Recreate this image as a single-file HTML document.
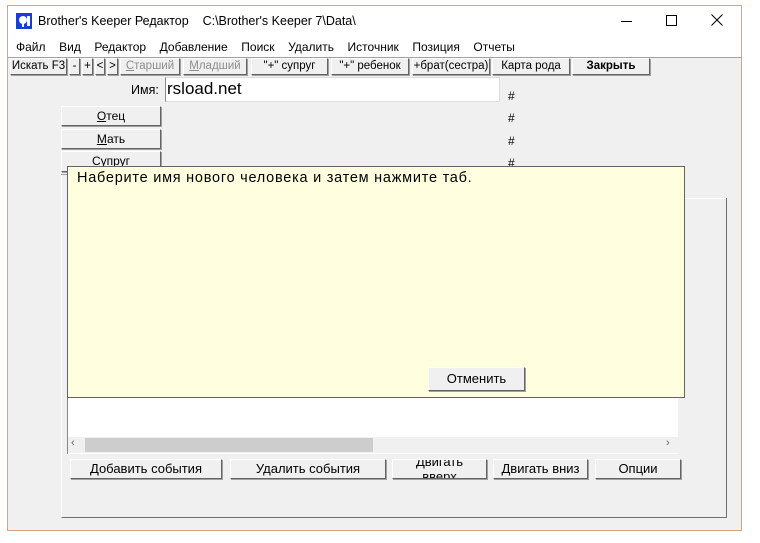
<!DOCTYPE html>
<html><head><meta charset="utf-8"><style>
*{margin:0;padding:0;box-sizing:border-box}
body{width:760px;height:543px;background:#fff;position:relative;overflow:hidden;font-family:"Liberation Sans","DejaVu Sans",sans-serif;font-size:12px;color:#000}
.a{position:absolute}
.win{left:7px;top:5px;width:735px;height:526px;border:1px solid #d9a47a;background:#f0f0f0}
.btn{position:absolute;background:#f0f0f0;border:1px solid;border-color:#fff #646464 #646464 #fff;box-shadow:1px 1px 0 #a0a0a0;text-align:center;font-size:12px;line-height:16px;white-space:nowrap;overflow:hidden}
.tb{top:58px;height:17px;font-size:11.5px;line-height:15px}
.menu span{margin-right:13.6px}
</style></head><body>
<div class="a win"></div>
<div class="a" style="left:8px;top:6px;width:733px;height:52px;background:#fff"></div>
<svg class="a" style="left:16px;top:13px" width="16" height="16"><rect width="16" height="16" fill="#1a3fd0"/><circle cx="7" cy="7" r="4" fill="#fff"/><rect x="6" y="9" width="2" height="5" fill="#fff"/><rect x="11" y="3" width="3" height="10" fill="#fff"/></svg>
<div class="a" style="left:38px;top:14px;font-size:12.5px">Brother's Keeper Редактор &nbsp;&nbsp; C:\Brother's Keeper 7\Data\</div>
<div class="a" style="left:621px;top:21px;width:11px;height:1px;background:#000"></div>
<div class="a" style="left:666px;top:15px;width:11px;height:11px;border:1px solid #000"></div>
<svg class="a" style="left:711px;top:14px" width="12" height="12"><path d="M0.5 0.5L11.5 11.5M11.5 0.5L0.5 11.5" stroke="#000" stroke-width="1"/></svg>
<div class="a menu" style="left:16px;top:40px;font-size:12px"><span>Файл</span><span>Вид</span><span>Редактор</span><span>Добавление</span><span>Поиск</span><span>Удалить</span><span>Источник</span><span>Позиция</span><span>Отчеты</span></div>
<div class="a" style="left:8px;top:57px;width:733px;height:1px;background:#a0a0a0"></div>
<div class="btn tb" style="left:10px;width:57px">Искать F3</div>
<div class="btn tb" style="left:69px;width:11px">-</div>
<div class="btn tb" style="left:82px;width:11px">+</div>
<div class="btn tb" style="left:95px;width:10px">&lt;</div>
<div class="btn tb" style="left:107px;width:11px">&gt;</div>
<div class="btn tb" style="left:120px;width:60px;color:#8d8d8d"><u>С</u>тарший</div>
<div class="btn tb" style="left:183px;width:64px;color:#8d8d8d"><u>М</u>ладший</div>
<div class="btn tb" style="left:251px;width:77px">"+" супруг</div>
<div class="btn tb" style="left:331px;width:78px">"+" ребенок</div>
<div class="btn tb" style="left:412px;width:78px">+брат(сестра)</div>
<div class="btn tb" style="left:492px;width:78px">Карта рода</div>
<div class="btn tb" style="left:572px;width:78px;font-weight:bold">Закрыть</div>
<div class="a" style="left:131px;top:83px;font-size:12.5px">Имя:</div>
<div class="a" style="left:165px;top:77px;width:335px;height:25px;background:#fff;border:1px solid #ddd;border-left:1px solid #888;font-size:17px;padding-left:1px;line-height:22px">rsload.net</div>
<div class="a" style="left:508px;top:85px;line-height:22.3px">#<br>#<br>#<br>#</div>
<div class="btn" style="left:61px;top:106px;width:100px;height:20px;line-height:18px"><u>О</u>тец</div>
<div class="btn" style="left:61px;top:129px;width:100px;height:20px;line-height:18px"><u>М</u>ать</div>
<div class="btn" style="left:61px;top:151px;width:100px;height:21px;line-height:18px"><u>С</u>упруг</div>
<div class="a" style="left:61px;top:175px;width:666px;height:343px;border:1px solid;border-color:transparent #707070 #707070 #fff"></div>
<div class="a" style="left:726px;top:175px;width:1px;height:23px;background:#f0f0f0"></div>
<div class="a" style="left:680px;top:198px;width:46px;height:1px;background:#fff"></div>
<div class="a" style="left:61px;top:174px;width:6px;height:1px;background:#a0a0a0"></div>
<div class="a" style="left:67px;top:398px;width:611px;height:56px;background:#fff;border-left:1px solid #888"></div>
<div class="a" style="left:68px;top:437px;width:610px;height:16px;background:#f0f0f0"></div>
<div class="a" style="left:85px;top:438px;width:288px;height:14px;background:#cdcdcd"></div>
<div class="a" style="left:71px;top:437px;font-size:11px;color:#606060">‹</div>
<div class="a" style="left:666px;top:437px;font-size:11px;color:#606060">›</div>
<div class="a" style="left:67px;top:166px;width:618px;height:232px;background:#ffffdf;border:1px solid #646464"></div>
<div class="a" style="left:77px;top:170px;font-size:14.5px;letter-spacing:0.75px">Наберите имя нового человека и затем нажмите таб.</div>
<div class="btn" style="left:428px;top:367px;width:97px;height:24px;line-height:22px;font-size:13px">Отменить</div>
<div class="btn" style="left:70px;top:459px;width:152px;height:20px;line-height:18px;font-size:13px">Добавить события</div>
<div class="btn" style="left:230px;top:459px;width:156px;height:20px;line-height:18px;font-size:13px">Удалить события</div>
<div class="btn" style="left:392px;top:459px;width:95px;height:20px;line-height:15px;font-size:13px;padding-top:0"><div style="margin-top:-6px">Двигать<br>вверх</div></div>
<div class="btn" style="left:493px;top:459px;width:95px;height:20px;line-height:18px;font-size:13px">Двигать вниз</div>
<div class="btn" style="left:595px;top:459px;width:86px;height:20px;line-height:18px;font-size:13px">Опции</div>
</body></html>
